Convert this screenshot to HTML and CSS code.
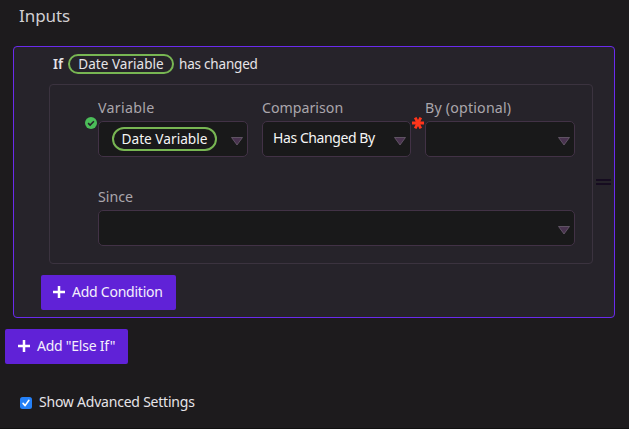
FILE: index.html
```html
<!DOCTYPE html>
<html lang="en">
<head>
<meta charset="utf-8">
<title>Inputs</title>
<link rel="stylesheet" href="styles.css">
</head>
<body>
<main class="panel">
  <h1 class="title">Inputs</h1>
  <section class="branch">
    <div class="summary"><b class="if">If</b><span class="pill">Date Variable</span><span class="changed">has changed</span></div>
    <div class="condition">
      <div class="row">
        <div class="field">
          <label class="label variable">Variable</label>
          <div class="select"><span class="pill large">Date Variable</span>
            <svg class="arrow" viewBox="0 0 12 9"><path d="M.5.5h11L6 8z"/></svg>
            <svg class="status" viewBox="0 0 12 12"><circle cx="6" cy="6" r="6" fill="#4bbd59"/><path d="M3.1 6.1 5.1 8.1 8.9 4.2" fill="none" stroke="#242129" stroke-width="1.5"/></svg>
          </div>
        </div>
        <div class="field">
          <label class="label comparison">Comparison</label>
          <div class="select"><span class="value">Has Changed By</span>
            <svg class="arrow" viewBox="0 0 12 9"><path d="M.5.5h11L6 8z"/></svg>
          </div>
        </div>
        <div class="field">
          <label class="label optional">By (optional)</label>
          <div class="select">
            <svg class="arrow" viewBox="0 0 12 9"><path d="M.5.5h11L6 8z"/></svg>
            <svg class="status" viewBox="0 0 12 12"><path d="M0 6h12M3.2.6l5.6 10.8M8.8.6 3.2 11.4" stroke="#ff351b" stroke-width="2.8"/></svg>
          </div>
        </div>
      </div>
      <div class="field since-field">
        <label class="label since">Since</label>
        <div class="select">
          <svg class="arrow" viewBox="0 0 12 9"><path d="M.5.5h11L6 8z"/></svg>
        </div>
      </div>
    </div>
    <button class="button add-condition"><svg class="plus" viewBox="0 0 12 12"><path d="M6 0v12M0 6h12"/></svg><span>Add Condition</span></button>
    <span class="handle"></span>
  </section>
  <button class="button add-else"><svg class="plus" viewBox="0 0 12 12"><path d="M6 0v12M0 6h12"/></svg><span>Add "Else If"</span></button>
  <div class="advanced"><svg class="check" viewBox="0 0 12 12"><rect width="12" height="12" rx="2.5" fill="#2480f7"/><path d="M3.1 6.4 5.1 8.6 8.9 3.3" fill="none" stroke="#fff" stroke-width="1.6" stroke-linecap="round" stroke-linejoin="round"/></svg><span>Show Advanced Settings</span></div>
</main>
</body>
</html>
```
FILE: styles.css
```css
* { box-sizing: border-box; }
body {
  margin: 0;
  background: #1d1b1d;
  color: #e6e4e8;
  font: 14px/20px "Noto Sans", sans-serif;
  white-space: nowrap;
}
svg { display: block; flex: none; }
.panel {
  height: 429px;
  overflow: hidden;
  padding: 4px 14px 0 5px;
  border-bottom: 1px solid #111;
}
.title {
  margin: 0 0 18px 14px;
  color: #d1cfd2;
  font-size: 17px;
  line-height: 24px;
  font-weight: 400;
  letter-spacing: -.05px;
}
.branch {
  position: relative;
  width: 602px;
  height: 272px;
  margin-left: 8px;
  padding: 7px 21px 0 35px;
  background: #26232a;
  border: 1px solid #6a2bed;
  border-radius: 4px;
}
.summary {
  display: flex;
  align-items: center;
  height: 20px;
  padding-left: 4px;
  font-size: 13.5px;
}
.if { width: 15px; font-weight: 600; }
.pill {
  width: 106px;
  height: 20px;
  border: 2px solid #78b653;
  border-radius: 10px;
  line-height: 16px;
  text-align: center;
}
.summary .pill { letter-spacing: .04px; }
.changed { margin-left: 5px; letter-spacing: -.2px; }
.condition {
  width: 544px;
  height: 180px;
  margin-top: 10px;
  padding: 12px 17px 0 48px;
  border: 1px solid #3b333f;
  border-radius: 4px;
}
.row { display: grid; grid-template-columns: 150px 149px 150px; gap: 14px; }
.label {
  display: block;
  height: 24px;
  padding-top: 1px;
  color: #aaa6ac;
  font-size: 14.2px;
  line-height: 20px;
}
.variable { letter-spacing: .3px; }
.optional { letter-spacing: .2px; }
.select {
  position: relative;
  display: flex;
  align-items: center;
  height: 36px;
  padding-left: 10px;
  background: #19191a;
  border: 1px solid #423246;
  border-radius: 5px;
  color: #f5f5f5;
}
.large { width: 105px; height: 24px; margin-left: 3px; border-radius: 12px; line-height: 20px; font-size: 13.7px; }
.value { margin-top: -3px; letter-spacing: -.42px; }
.arrow { position: absolute; right: 4px; top: 15px; width: 12px; height: 9px; fill: #49334f; stroke: #746779; stroke-width: .7; }
.status { position: absolute; left: -14px; top: -5px; width: 12px; height: 12px; }
.since-field { margin-top: 29px; }
.since-field .select { width: 477px; }
.button {
  display: flex;
  align-items: center;
  height: 35px;
  padding: 0 0 0 12px;
  border: 0;
  border-radius: 2px;
  background: #6022d7;
  color: #f4effc;
  font: 14px/20px "Noto Sans", sans-serif;
  letter-spacing: -.24px;
}
.button span { margin-top: -2px; }
.plus { width: 12px; height: 12px; margin: -1px 7px 0 0; stroke: #fff; stroke-width: 2.5; }
.add-condition { width: 135px; margin: 11px 0 0 -8px; }
.add-else { width: 123px; margin-top: 11px; padding-left: 13px; }
.handle {
  position: absolute;
  right: 3px;
  top: 132px;
  width: 15px;
  height: 6px;
  border: solid #160c20;
  border-width: 2px 0;
}
.advanced { display: flex; align-items: center; gap: 7px; margin: 28px 0 0 15px; letter-spacing: -.22px; }
.check { width: 12px; height: 12px; margin-top: 2px; }
```
